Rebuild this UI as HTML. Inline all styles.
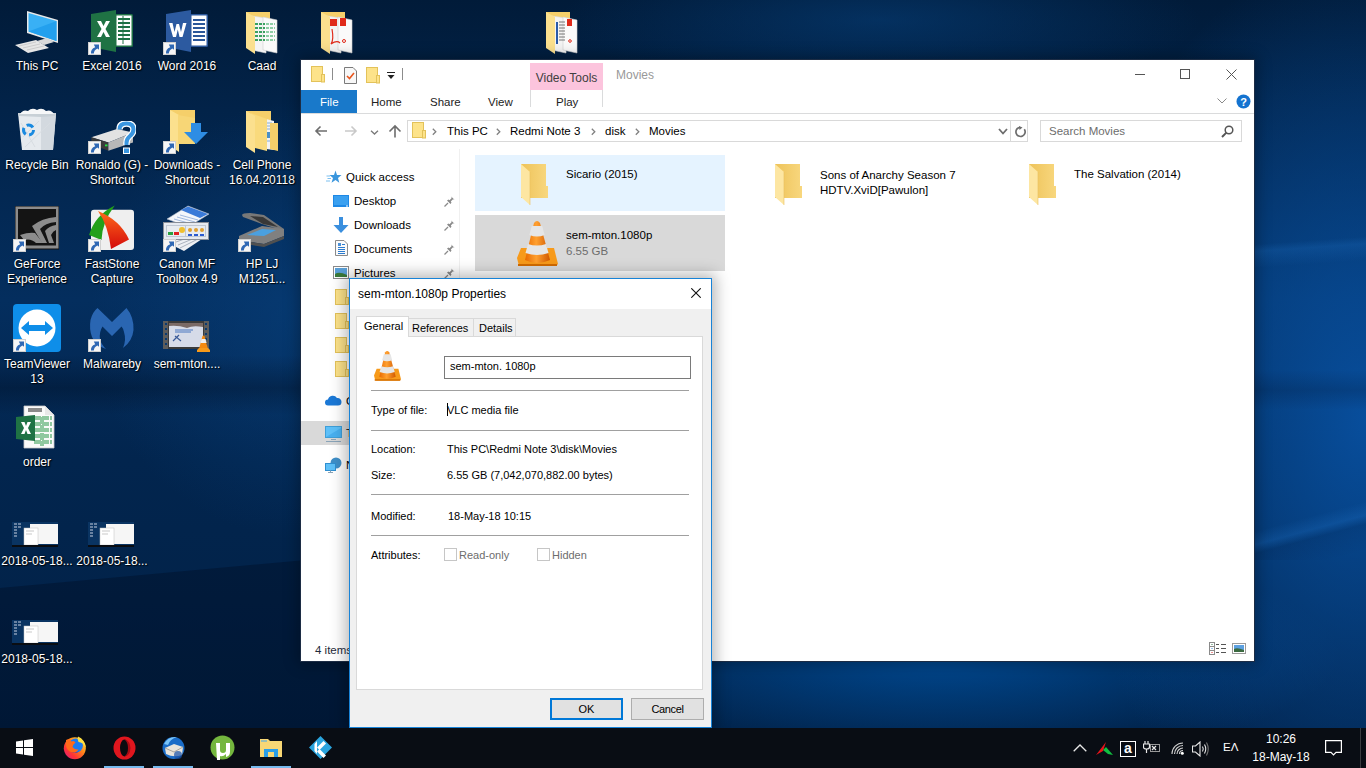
<!DOCTYPE html>
<html><head><meta charset="utf-8">
<style>
*{box-sizing:border-box;margin:0;padding:0}
html,body{width:1366px;height:768px;overflow:hidden}
body{position:relative;font-family:"Liberation Sans",sans-serif;font-size:12px;color:#000;
background:
 radial-gradient(ellipse 300px 470px at 1366px 420px, rgba(8,82,164,.9) 0%, rgba(8,82,164,0) 100%),
 radial-gradient(ellipse 400px 110px at 940px 655px, rgba(0,72,144,1) 0%, rgba(0,72,144,0) 100%),
 radial-gradient(ellipse 320px 70px at 880px 20px, rgba(6,62,120,.6) 0%, rgba(6,62,120,0) 100%),
 radial-gradient(ellipse 220px 220px at 310px 320px, rgba(8,66,128,.6) 0%, rgba(8,66,128,0) 100%),
 linear-gradient(180deg,#011b39 0px,#022349 110px,#042e5e 300px,#02254e 460px,#02234a 600px,#011f43 728px);}
.abs{position:absolute}
.lbl{position:absolute;color:#fff;text-align:center;font-size:12px;line-height:15px;text-shadow:1px 1px 1px rgba(0,0,0,.9),0 0 2px rgba(0,0,0,.6);width:74px}
/* explorer */
#exp{font-size:11.5px;position:absolute;left:300px;top:59px;width:955px;height:603px;background:#fff;border:1px solid #1c2c44;box-shadow:0 0 14px 2px rgba(0,0,0,.3)}
#dlg{position:absolute;left:349px;top:278px;width:363px;height:450px;background:#f0f0f0;border:1px solid #1883d7;box-shadow:0 0 14px 4px rgba(0,0,0,.28)}
#task{position:absolute;left:0;top:728px;width:1366px;height:40px;background:#090d14}

.chev{width:5px;height:7px;background:no-repeat}

.pin{width:11px;height:11px}
.bigfolder{width:28px;height:41px}
.vlc{width:41px;height:46px}

.dl{font-size:11px}
.sep{left:21px;width:318px;height:1px;background:#a0a0a0}
</style></head>
<body>

<div class="abs" style="left:0;top:0;width:350px;height:728px;background:rgba(0,8,22,.3);clip-path:polygon(0 588px,350px 556px,350px 728px,0 728px)"></div>
<div class="abs" style="left:0;top:355px;width:300px;height:60px;background:linear-gradient(180deg,rgba(0,8,22,0),rgba(0,8,22,.3) 55%,rgba(0,8,22,0))"></div>
<div class="abs" style="left:1254px;top:230px;width:112px;height:40px;background:linear-gradient(176deg,rgba(40,130,220,0) 30%,rgba(40,130,220,.18) 45%,rgba(40,130,220,0) 80%)"></div>
<div class="abs" style="left:1254px;top:370px;width:112px;height:40px;background:linear-gradient(180deg,rgba(0,10,30,0),rgba(0,10,30,.18) 50%,rgba(0,10,30,0))"></div>
<div class="abs" style="left:1254px;top:500px;width:112px;height:60px;background:linear-gradient(165deg,rgba(40,130,220,0) 35%,rgba(40,130,220,.2) 50%,rgba(0,10,30,.1) 60%,rgba(0,10,30,0) 90%)"></div>
<!-- desktop icons -->
<svg class="abs" style="left:14px;top:10px" width="46" height="44" viewBox="0 0 46 44"><path d="M13 1L44 10V33L13 23Z" fill="#e8e8e8"/><path d="M14.5 3L42.5 11V31L14.5 21.5Z" fill="#39b0f5"/><path d="M14.5 21.5L42.5 11V31Z" fill="#23a0ee"/><path d="M23 31L33 28L40 32L30 35Z" fill="#d9d9d9"/><path d="M1 35L22 30L35 38L14 43Z" fill="#e6e6e6"/><path d="M5 36L22 32M9 38L26 34M13 40L30 36" stroke="#b8b8b8" stroke-width=".6"/></svg>
<div class="lbl" style="left:0.0px;top:58.5px;width:74px">This PC</div>
<svg class="abs" style="left:88px;top:10px" width="46" height="43" viewBox="0 0 46 43"><rect x="27" y="4" width="18" height="33" rx="1.5" fill="#1e7145"/><rect x="28.5" y="5.5" width="15" height="30" fill="#fff"/><path d="M30 9H42M30 13H42M30 17H42M30 21H42M30 25H42M30 29H42" stroke="#1e7145" stroke-width="2"/><path d="M35 6V34" stroke="#1e7145" stroke-width="1"/><path d="M3 4L28 0V42L3 37Z" fill="#1f7244"/><path d="M9 11H13L15.5 16L18 11H22L17.5 19L22 27H18L15.5 22L13 27H9L13.5 19Z" fill="#fff"/></svg>
<svg class="abs" style="left:88px;top:42px" width="13" height="13" viewBox="0 0 13 13"><rect x="0.5" y="0.5" width="12" height="12" fill="#f6f6f6" stroke="#d0d0d0"/><path d="M3 11.5Q2.5 7 7.2 5.2L5.8 2.5H11V7.8L9.4 6.5Q6 8.2 5.8 11.5Z" fill="#2f68b4"/></svg>
<div class="lbl" style="left:75.0px;top:58.5px;width:74px">Excel 2016</div>
<svg class="abs" style="left:166px;top:10px" width="43" height="43" viewBox="0 0 43 43"><rect x="24" y="4" width="18" height="33" rx="1.5" fill="#2b579a"/><rect x="25.5" y="5.5" width="15" height="30" fill="#fff"/><path d="M27 10H39M27 14H39M27 18H39M27 22H39M27 26H39M27 30H39" stroke="#2b579a" stroke-width="2"/><path d="M0 4L25 0V42L0 37Z" fill="#2c5aa0"/><path d="M3 13H6.5L8.5 22L10.5 14H13L15 22L17 13H20.5L16.5 27H13.5L11.8 19.5L10 27H7Z" fill="#fff"/></svg>
<svg class="abs" style="left:163px;top:42px" width="13" height="13" viewBox="0 0 13 13"><rect x="0.5" y="0.5" width="12" height="12" fill="#f6f6f6" stroke="#d0d0d0"/><path d="M3 11.5Q2.5 7 7.2 5.2L5.8 2.5H11V7.8L9.4 6.5Q6 8.2 5.8 11.5Z" fill="#2f68b4"/></svg>
<div class="lbl" style="left:150.0px;top:58.5px;width:74px">Word 2016</div>
<svg class="abs" style="left:246px;top:12px" width="32" height="42" viewBox="0 0 32 42"><path d="M0 0H24V35H0Z" fill="#f5cf6a"/><path d="M6 4L20 6V41L6 38Z" fill="#f4f4f4" stroke="#d8d8d8" stroke-width=".6"/><path d="M17 5L31 8V41L17 38Z" fill="#fafafa" stroke="#d0d0d0" stroke-width=".6"/><path d="M9 12H19M9 16H19M9 20H19M9 24H19M9 28H19" stroke="#3aa060" stroke-width="1.8" stroke-dasharray="3 1"/><path d="M20 12H29M20 16H29M20 20H29M20 24H29M20 28H29" stroke="#6cc08a" stroke-width="1.6" stroke-dasharray="3 1"/><path d="M0 0L9 5V42L0 36Z" fill="#fbe08e"/></svg>
<div class="lbl" style="left:225.0px;top:58.5px;width:74px">Caad</div>
<svg class="abs" style="left:321px;top:12px" width="32" height="42" viewBox="0 0 32 42"><path d="M0 0H24V35H0Z" fill="#f5cf6a"/><path d="M6 4L20 6V41L6 38Z" fill="#f4f4f4" stroke="#d8d8d8" stroke-width=".6"/><path d="M17 5L31 8V41L17 38Z" fill="#fafafa" stroke="#d0d0d0" stroke-width=".6"/><rect x="9" y="7" width="7" height="7" fill="#e02a1a"/><path d="M11 17Q13 28 10 32Q16 28 19 31" fill="none" stroke="#e02a1a" stroke-width="1.2"/><rect x="19" y="6" width="6" height="8" fill="#e02a1a"/><circle cx="23" cy="29" r="1.5" fill="none" stroke="#e02a1a"/><path d="M0 0L9 5V42L0 36Z" fill="#fbe08e"/></svg>
<svg class="abs" style="left:546px;top:12px" width="32" height="42" viewBox="0 0 32 42"><path d="M0 0H24V35H0Z" fill="#f5cf6a"/><path d="M6 4L20 6V41L6 38Z" fill="#f4f4f4" stroke="#d8d8d8" stroke-width=".6"/><path d="M17 5L31 8V41L17 38Z" fill="#fafafa" stroke="#d0d0d0" stroke-width=".6"/><rect x="10" y="10" width="2" height="22" fill="#2a5aa8"/><path d="M13 10H19M13 13H19M13 16H19M13 19H19M13 22H19M13 25H19M13 28H19" stroke="#555" stroke-width=".8"/><rect x="21" y="7" width="5" height="7" fill="#e02a1a"/><circle cx="24" cy="29" r="1.3" fill="none" stroke="#e02a1a"/><path d="M0 0L9 5V42L0 36Z" fill="#fbe08e"/></svg>
<svg class="abs" style="left:17px;top:107px" width="40" height="45" viewBox="0 0 40 45"><path d="M1 6L39 6L36 43L5 43Z" fill="#e6eaee"/><path d="M24 9L39 6L36 43L24 43Z" fill="#d3d9df"/><path d="M1 6L39 6L38 9L24 10L2 9Z" fill="#c8d0d6"/><path d="M3 7Q6 2 11 4Q15 0 20 3Q25 0 29 4Q34 2 37 7Z" fill="#f6f7f8"/><path d="M6 30L22 14M8 40L33 16M4 16L18 40" stroke="#d8dde2" stroke-width="1"/><circle cx="11.5" cy="23" r="5" fill="none" stroke="#1a8ae0" stroke-width="3" stroke-dasharray="7 3.5"/></svg>
<div class="lbl" style="left:0.0px;top:157.5px;width:74px">Recycle Bin</div>
<svg class="abs" style="left:88px;top:121px" width="48" height="34" viewBox="0 0 48 34"><path d="M3.4 16.3L29 8L45 11.6L20.4 21.5Z" fill="#e2e2e2"/><path d="M3.4 16.3L20.4 21.5V29.7L3.4 23.3Z" fill="#3a3a3a"/><path d="M20.4 21.5L45 11.6V21.5L20.4 29.7Z" fill="#b8b8b8"/><rect x="17" y="23.5" width="2.5" height="1.8" fill="#20e040"/><path d="M31.5 8.5Q31.5 2.5 38.5 2.5Q45.5 2.5 45.5 8.5Q45.5 12.5 41.5 15.5Q38.5 18 38.5 22V24" fill="none" stroke="#fff" stroke-width="6.5"/><path d="M31.5 8.5Q31.5 2.5 38.5 2.5Q45.5 2.5 45.5 8.5Q45.5 12.5 41.5 15.5Q38.5 18 38.5 22V24" fill="none" stroke="#3a96e0" stroke-width="4"/><rect x="35" y="26.5" width="7" height="6.5" fill="#fff"/><rect x="36" y="27.5" width="5" height="4.5" fill="#3a96e0"/></svg>
<svg class="abs" style="left:88px;top:141px" width="13" height="13" viewBox="0 0 13 13"><rect x="0.5" y="0.5" width="12" height="12" fill="#f6f6f6" stroke="#d0d0d0"/><path d="M3 11.5Q2.5 7 7.2 5.2L5.8 2.5H11V7.8L9.4 6.5Q6 8.2 5.8 11.5Z" fill="#2f68b4"/></svg>
<div class="lbl" style="left:72.0px;top:157.5px;width:80px">Ronaldo (G) -<br>Shortcut</div>
<svg class="abs" style="left:170px;top:110px" width="40" height="42" viewBox="0 0 40 42"><path d="M0 0H25V34H0Z" fill="#f5cf6a"/><path d="M0 0L9 5V42L0 36Z" fill="#fbe08e"/><path d="M8 5L25 8V34L8 34Z" fill="#f7d676"/><path d="M21 13H31V22H38L26 34L14 22H21Z" fill="#2e8de4"/></svg>
<svg class="abs" style="left:163px;top:141px" width="13" height="13" viewBox="0 0 13 13"><rect x="0.5" y="0.5" width="12" height="12" fill="#f6f6f6" stroke="#d0d0d0"/><path d="M3 11.5Q2.5 7 7.2 5.2L5.8 2.5H11V7.8L9.4 6.5Q6 8.2 5.8 11.5Z" fill="#2f68b4"/></svg>
<div class="lbl" style="left:147.0px;top:157.5px;width:80px">Downloads -<br>Shortcut</div>
<svg class="abs" style="left:246px;top:111px" width="32" height="42" viewBox="0 0 32 42"><path d="M0 0H25V35H0Z" fill="#f5cf6a"/><path d="M20 8L28 10V39L20 38Z" fill="#f3f3f3"/><path d="M21 12H26M21 15H26M21 18H26M21 30H26" stroke="#6a9ac8" stroke-width=".8"/><rect x="21" y="21" width="5" height="6" fill="#4a90c8"/><path d="M24 12H32V40L24 38Z" fill="#f5cf6a"/><path d="M5 2L21 8V40L5 36Z" fill="#f9da7c"/><path d="M0 0L9 5V42L0 36Z" fill="#fbe08e"/></svg>
<div class="lbl" style="left:222.0px;top:157.5px;width:80px">Cell Phone<br>16.04.20118</div>
<svg class="abs" style="left:15px;top:206px" width="44" height="44" viewBox="0 0 44 44"><rect x="0" y="0" width="44" height="43.5" fill="#121212"/><rect x="0.5" y="0.5" width="43" height="42" fill="#8c8c8c"/><rect x="3" y="3" width="38" height="34" fill="#141414"/><rect x="3" y="37" width="38" height="2.5" fill="#141414"/><path d="M5 29Q14 26 20 27L28 37H21Q16 32 9 34Z" fill="#8c8c8c"/><path d="M17 20Q27 12 41 11V16Q30 17 25 23L32 37H27Z" fill="#8c8c8c"/><path d="M30 25Q34 20 41 19V24Q38 25 36 29L39 37H34Z" fill="#8c8c8c"/></svg>
<svg class="abs" style="left:13px;top:239px" width="13" height="13" viewBox="0 0 13 13"><rect x="0.5" y="0.5" width="12" height="12" fill="#f6f6f6" stroke="#d0d0d0"/><path d="M3 11.5Q2.5 7 7.2 5.2L5.8 2.5H11V7.8L9.4 6.5Q6 8.2 5.8 11.5Z" fill="#2f68b4"/></svg>
<div class="lbl" style="left:-3.0px;top:256.5px;width:80px">GeForce<br>Experience</div>
<svg class="abs" style="left:88px;top:204px" width="48" height="48" viewBox="0 0 48 48"><defs><linearGradient id="fsr" x1="0" y1="0" x2="0" y2="1"><stop offset="0" stop-color="#ff6a1a"/><stop offset="1" stop-color="#d40a0a"/></linearGradient></defs><rect x="3" y="5.7" width="43" height="40.3" rx="3" fill="#efefef"/><path d="M26.8 1.4Q7 11 1 31L13.5 36Q14 18 26.8 1.4Z" fill="#22a01a"/><path d="M10 7Q32 16 41 35.5L23 45Q20 21 10 7Z" fill="url(#fsr)"/></svg>
<svg class="abs" style="left:88px;top:239px" width="13" height="13" viewBox="0 0 13 13"><rect x="0.5" y="0.5" width="12" height="12" fill="#f6f6f6" stroke="#d0d0d0"/><path d="M3 11.5Q2.5 7 7.2 5.2L5.8 2.5H11V7.8L9.4 6.5Q6 8.2 5.8 11.5Z" fill="#2f68b4"/></svg>
<div class="lbl" style="left:72.0px;top:256.5px;width:80px">FastStone<br>Capture</div>
<svg class="abs" style="left:162px;top:205px" width="48" height="47" viewBox="0 0 48 47"><path d="M10 30L46 20V30L22 46L10 40Z" fill="#eef0f4"/><path d="M12 34L44 24M14 37L42 27M16 40L40 30M18 43L36 34" stroke="#9aa2b0" stroke-width=".8"/><path d="M5 14L26 1L47 9L26 22Z" fill="#f4f6fa" stroke="#b0b8c8" stroke-width=".6"/><path d="M19 5L26 1.5L46 9L38 13Z" fill="#3a7ad8"/><path d="M12 14L30 19M15 12L33 17M18 10L36 15" stroke="#8aa8d8" stroke-width=".8"/><rect x="1.5" y="17.5" width="45" height="17" fill="#e6eaf0" stroke="#8a8f98"/><rect x="4" y="20" width="40" height="12" fill="#c0c8d4"/><rect x="5" y="21" width="18" height="10" fill="#e8ecf0"/><rect x="24" y="21" width="19" height="10" fill="#e8ecf0"/><rect x="6" y="27" width="5" height="3" fill="#2aa040"/><rect x="12" y="27" width="5" height="3" fill="#e02020"/><circle cx="20" cy="25" r="3" fill="#f0c030"/><circle cx="28" cy="25" r="2" fill="#e0a030"/><circle cx="34" cy="25" r="2" fill="#e0a030"/><circle cx="40" cy="25" r="2" fill="#e0a030"/><path d="M26 30H30M32 30H36M38 30H42" stroke="#2a5ad0" stroke-width="2"/></svg>
<svg class="abs" style="left:163px;top:239px" width="13" height="13" viewBox="0 0 13 13"><rect x="0.5" y="0.5" width="12" height="12" fill="#f6f6f6" stroke="#d0d0d0"/><path d="M3 11.5Q2.5 7 7.2 5.2L5.8 2.5H11V7.8L9.4 6.5Q6 8.2 5.8 11.5Z" fill="#2f68b4"/></svg>
<div class="lbl" style="left:147.0px;top:256.5px;width:80px">Canon MF<br>Toolbox 4.9</div>
<svg class="abs" style="left:238px;top:211px" width="48" height="38" viewBox="0 0 48 38"><path d="M4 4Q4 2 12 2L26 4L46 18L43 19L24 13L5 6Z" fill="#787878"/><path d="M12 5L25 6L40 16L25 13Z" fill="#383838"/><path d="M1 25L24 15L46 18V25L26 33L1 29Z" fill="#808080"/><path d="M1 29L26 33L46 25V28L26 36L1 32Z" fill="#505050"/><path d="M9 24L24 18L38 19L26 25Z" fill="#4aa0e0"/></svg>
<svg class="abs" style="left:238px;top:239px" width="13" height="13" viewBox="0 0 13 13"><rect x="0.5" y="0.5" width="12" height="12" fill="#f6f6f6" stroke="#d0d0d0"/><path d="M3 11.5Q2.5 7 7.2 5.2L5.8 2.5H11V7.8L9.4 6.5Q6 8.2 5.8 11.5Z" fill="#2f68b4"/></svg>
<div class="lbl" style="left:222.0px;top:256.5px;width:80px">HP LJ<br>M1251...</div>
<svg class="abs" style="left:13px;top:304px" width="48" height="48" viewBox="0 0 48 48"><rect x="0" y="0" width="48" height="48" rx="4" fill="#0e8ee9"/><circle cx="24" cy="24" r="18.5" fill="#fff"/><path d="M8 24L16 17V21H32V17L40 24L32 31V27H16V31Z" fill="#0e8ee9"/></svg>
<svg class="abs" style="left:13px;top:339px" width="13" height="13" viewBox="0 0 13 13"><rect x="0.5" y="0.5" width="12" height="12" fill="#f6f6f6" stroke="#d0d0d0"/><path d="M3 11.5Q2.5 7 7.2 5.2L5.8 2.5H11V7.8L9.4 6.5Q6 8.2 5.8 11.5Z" fill="#2f68b4"/></svg>
<div class="lbl" style="left:-3.0px;top:356.5px;width:80px">TeamViewer<br>13</div>
<svg class="abs" style="left:88px;top:306px" width="48" height="45" viewBox="0 0 48 45"><path d="M9.5 2L24 16L38.5 2Q46 11 45.5 24Q44.5 35 35 42Q38.5 34 36 26Q35 22 33.5 20.5L24 30L14.5 20.5Q11 26 12 33Q13 38 18 43Q8 40 4 31Q1 23 2.5 14Q4.5 6 9.5 2Z" fill="#2a66b2"/></svg>
<svg class="abs" style="left:88px;top:339px" width="13" height="13" viewBox="0 0 13 13"><rect x="0.5" y="0.5" width="12" height="12" fill="#f6f6f6" stroke="#d0d0d0"/><path d="M3 11.5Q2.5 7 7.2 5.2L5.8 2.5H11V7.8L9.4 6.5Q6 8.2 5.8 11.5Z" fill="#2f68b4"/></svg>
<div class="lbl" style="left:75.0px;top:356.5px;width:74px">Malwareby</div>
<svg class="abs" style="left:163px;top:321px" width="47" height="32" viewBox="0 0 47 32"><rect x="0" y="0" width="46" height="28" fill="#5c5c5c"/><rect x="5" y="0" width="36" height="28" fill="#3a3a3a"/><rect x="6" y="2" width="34" height="24" fill="#d6dbe8"/><path d="M6 2H40V6Q30 4 24 7Q15 4 6 5Z" fill="#7a6a66"/><path d="M12 9H30M12 11H28" stroke="#4a78c0" stroke-width="1.2"/><path d="M12 15L18 20M10 20L16 14" stroke="#3a5a98" stroke-width="1.2"/><path d="M2 3H4M2 8H4M2 13H4M2 18H4M2 23H4M42 3H44M42 8H44M42 13H44M42 18H44M42 23H44" stroke="#0a3a70" stroke-width="2"/><path d="M39.5 15Q40.5 14 41.5 15L45 28H36Z" fill="#f58a10"/><path d="M38.5 18H42.5L43.5 22H37.5Z" fill="#eee"/><path d="M34 29L36 27H45L47 29V31H34Z" fill="#f79a1a"/></svg>
<div class="lbl" style="left:147.0px;top:356.5px;width:80px">sem-mton....</div>
<svg class="abs" style="left:15px;top:405px" width="40" height="44" viewBox="0 0 40 44"><path d="M9 1H30L39 10V43H9Z" fill="#fafafa" stroke="#c8c8c8" stroke-width=".8"/><path d="M30 1V10H39" fill="#e8e8e8"/><path d="M13 5H27" stroke="#8a8a8a" stroke-width="4"/><path d="M19 13H37M19 19H37M19 25H37M19 31H37M19 37H37M27 12V41" stroke="#90c8a0" stroke-width="4" stroke-dasharray="7 1"/><path d="M1 12L20 10V36L1 34Z" fill="#1f7244"/><path d="M6 17H9.5L11 21L12.5 17H16L13 23L16 29H12.5L11 25L9.5 29H6L9 23Z" fill="#fff"/></svg>
<div class="lbl" style="left:0.0px;top:454.5px;width:74px">order</div>
<svg class="abs" style="left:12px;top:522px" width="46" height="25" viewBox="0 0 46 25"><rect x="0" y="0" width="46" height="25" fill="#0a3462"/><path d="M2 2H5M6 2H9M2 5H5M6 5H9M2 8H5M2 11H5M2 14H5" stroke="#c8d0e0" stroke-width="1.2"/><rect x="18" y="2" width="28" height="20" fill="#f6f6f6"/><rect x="12" y="6" width="14" height="17" fill="#fff" stroke="#c0c0c0" stroke-width=".5"/><path d="M14 9H22M14 12H20" stroke="#bbb" stroke-width=".8"/><rect x="0" y="23" width="46" height="2" fill="#0a0d12"/></svg>
<div class="lbl" style="left:-3.0px;top:553.5px;width:80px">2018-05-18...</div>
<svg class="abs" style="left:88px;top:522px" width="46" height="25" viewBox="0 0 46 25"><rect x="0" y="0" width="46" height="25" fill="#0a3462"/><path d="M2 2H5M6 2H9M2 5H5M6 5H9M2 8H5M2 11H5M2 14H5" stroke="#c8d0e0" stroke-width="1.2"/><rect x="18" y="2" width="28" height="20" fill="#f6f6f6"/><rect x="12" y="6" width="14" height="17" fill="#fff" stroke="#c0c0c0" stroke-width=".5"/><path d="M14 9H22M14 12H20" stroke="#bbb" stroke-width=".8"/><rect x="0" y="23" width="46" height="2" fill="#0a0d12"/></svg>
<div class="lbl" style="left:72.0px;top:553.5px;width:80px">2018-05-18...</div>
<svg class="abs" style="left:12px;top:620px" width="46" height="25" viewBox="0 0 46 25"><rect x="0" y="0" width="46" height="25" fill="#0a3462"/><path d="M2 2H5M6 2H9M2 5H5M6 5H9M2 8H5M2 11H5M2 14H5" stroke="#c8d0e0" stroke-width="1.2"/><rect x="18" y="2" width="28" height="20" fill="#f6f6f6"/><rect x="12" y="6" width="14" height="17" fill="#fff" stroke="#c0c0c0" stroke-width=".5"/><path d="M14 9H22M14 12H20" stroke="#bbb" stroke-width=".8"/><rect x="0" y="23" width="46" height="2" fill="#0a0d12"/></svg>
<div class="lbl" style="left:-3.0px;top:651.5px;width:80px">2018-05-18...</div>
<!-- explorer window -->

<div id="exp">
 <!-- QAT -->
 <svg class="abs" style="left:10px;top:6px" width="14" height="17" viewBox="0 0 14 17"><rect x="0.5" y="0.5" width="11" height="15" fill="#fde38a" stroke="#e3c25a"/><rect x="10.5" y="8.5" width="3" height="7.5" fill="#fde38a" stroke="#e3c25a"/></svg>
 <div class="abs" style="left:31px;top:8px;width:1px;height:12px;background:#8c8c8c"></div>
 <svg class="abs" style="left:43px;top:7px" width="13" height="17" viewBox="0 0 13 17"><path d="M0.5 0.5H9L12.5 4V16.5H0.5Z" fill="#f7f7f7" stroke="#7a7a7a"/><path d="M3 9L5.5 11.5L10 6" fill="none" stroke="#e8541c" stroke-width="1.6"/></svg>
 <svg class="abs" style="left:65px;top:7px" width="14" height="17" viewBox="0 0 14 17"><rect x="0.5" y="0.5" width="11" height="15" fill="#fde38a" stroke="#e3c25a"/><rect x="10.5" y="8.5" width="3" height="7.5" fill="#fde38a" stroke="#e3c25a"/></svg>
 <svg class="abs" style="left:86px;top:12px" width="8" height="8" viewBox="0 0 8 8"><rect x="0" y="0" width="8" height="1" fill="#222"/><path d="M0.5 3H7.5L4 7Z" fill="#222"/></svg>
 <div class="abs" style="left:101px;top:8px;width:1px;height:12px;background:#8c8c8c"></div>
 <div class="abs" style="left:229px;top:3px;width:73px;height:27px;background:#fcc4dd"></div>
 <div class="abs" style="left:229px;top:11px;width:73px;text-align:center;color:#404040;font-size:12px">Video Tools</div>
 <div class="abs" style="left:315px;top:8px;color:#999;font-size:12px">Movies</div>
 <!-- window buttons -->
 <div class="abs" style="left:834px;top:14px;width:10px;height:1px;background:#555"></div>
 <div class="abs" style="left:879px;top:9px;width:10px;height:10px;border:1px solid #555"></div>
 <svg class="abs" style="left:925px;top:9px" width="11" height="11" viewBox="0 0 11 11"><path d="M0.5 0.5L10.5 10.5M10.5 0.5L0.5 10.5" stroke="#555" stroke-width="1"/></svg>
 <!-- ribbon tabs -->
 <div class="abs" style="left:0;top:30px;width:56px;height:23px;background:#1979ca"></div>
 <div class="abs" style="left:19px;top:36px;color:#fff">File</div>
 <div class="abs" style="left:70px;top:36px;color:#222">Home</div>
 <div class="abs" style="left:129px;top:36px;color:#222">Share</div>
 <div class="abs" style="left:187px;top:36px;color:#222">View</div>
 <div class="abs" style="left:229px;top:30px;width:1px;height:17px;background:#dadbdc"></div>
 <div class="abs" style="left:301px;top:30px;width:1px;height:17px;background:#dadbdc"></div>
 <div class="abs" style="left:255px;top:36px;color:#222">Play</div>
 <div class="abs" style="left:0;top:53px;width:953px;height:1px;background:#dadbdc"></div>
 <svg class="abs" style="left:916px;top:38px" width="10" height="6" viewBox="0 0 10 6"><path d="M0.5 0.5L5 5L9.5 0.5" fill="none" stroke="#8a8a8a"/></svg>
 <svg class="abs" style="left:935px;top:34px" width="15" height="15" viewBox="0 0 15 15"><circle cx="7.5" cy="7.5" r="7" fill="#1473d0"/><text x="7.5" y="11.5" text-anchor="middle" font-family="Liberation Sans" font-weight="bold" font-size="11" fill="#fff">?</text></svg>
 <!-- nav arrows -->
 <svg class="abs" style="left:13px;top:65px" width="14" height="12" viewBox="0 0 14 12"><path d="M13 6H2M6.5 1.5L2 6L6.5 10.5" fill="none" stroke="#6d6d6d" stroke-width="1.6"/></svg>
 <svg class="abs" style="left:43px;top:65px" width="14" height="12" viewBox="0 0 14 12"><path d="M1 6H12M7.5 1.5L12 6L7.5 10.5" fill="none" stroke="#c9c9c9" stroke-width="1.6"/></svg>
 <svg class="abs" style="left:69px;top:70px" width="9" height="5" viewBox="0 0 9 5"><path d="M1 0.8L4.5 4L8 0.8" fill="none" stroke="#7a7a7a" stroke-width="1.3"/></svg>
 <svg class="abs" style="left:87px;top:64px" width="14" height="14" viewBox="0 0 14 14"><path d="M7 13.5V2M1.5 7.5L7 2L12.5 7.5" fill="none" stroke="#6d6d6d" stroke-width="1.6"/></svg>
 <!-- address box -->
 <div class="abs" style="left:106px;top:60px;width:621px;height:22px;border:1px solid #d9d9d9"></div>
 <div class="abs" style="left:709px;top:60px;width:1px;height:22px;background:#d9d9d9"></div>
 <svg class="abs" style="left:697px;top:68px" width="10" height="7" viewBox="0 0 10 7"><path d="M1 1L5 5.5L9 1" fill="none" stroke="#6d6d6d" stroke-width="1.8"/></svg>
 <svg class="abs" style="left:714px;top:66px" width="12" height="12" viewBox="0 0 12 12"><path d="M9.3 3.2A4.6 4.6 0 1 1 5 1.3" fill="none" stroke="#6d6d6d" stroke-width="1.7"/><path d="M4 0L7.5 1.6L4.5 4Z" fill="#6d6d6d"/></svg>
 <svg class="abs" style="left:111px;top:62px" width="14" height="17" viewBox="0 0 14 17"><rect x="0.5" y="0.5" width="11" height="15" fill="#fde38a" stroke="#e3c25a"/><rect x="10.5" y="8.5" width="3" height="7.5" fill="#fde38a" stroke="#e3c25a"/></svg>
 <div class="abs chev" style="left:131px;top:66px"><svg width="5" height="8" viewBox="0 0 5 8"><path d="M0.8 0.8L3.8 3.8L0.8 6.8" fill="none" stroke="#808080" stroke-width="1.3"/></svg></div>
 <div class="abs" style="left:146px;top:65px">This PC</div>
 <div class="abs chev" style="left:195px;top:66px"><svg width="5" height="8" viewBox="0 0 5 8"><path d="M0.8 0.8L3.8 3.8L0.8 6.8" fill="none" stroke="#808080" stroke-width="1.3"/></svg></div>
 <div class="abs" style="left:209px;top:65px">Redmi Note 3</div>
 <div class="abs chev" style="left:290px;top:66px"><svg width="5" height="8" viewBox="0 0 5 8"><path d="M0.8 0.8L3.8 3.8L0.8 6.8" fill="none" stroke="#808080" stroke-width="1.3"/></svg></div>
 <div class="abs" style="left:304px;top:65px">disk</div>
 <div class="abs chev" style="left:334px;top:66px"><svg width="5" height="8" viewBox="0 0 5 8"><path d="M0.8 0.8L3.8 3.8L0.8 6.8" fill="none" stroke="#808080" stroke-width="1.3"/></svg></div>
 <div class="abs" style="left:348px;top:65px">Movies</div>
 <!-- search -->
 <div class="abs" style="left:739px;top:60px;width:202px;height:22px;border:1px solid #d9d9d9"></div>
 <div class="abs" style="left:748px;top:65px;color:#6d6d6d">Search Movies</div>
 <svg class="abs" style="left:920px;top:65px" width="13" height="13" viewBox="0 0 13 13"><circle cx="8" cy="5" r="3.8" fill="none" stroke="#555" stroke-width="1.5"/><path d="M5.4 7.6L1 12" stroke="#555" stroke-width="2"/></svg>
 <!-- nav pane -->
 <div class="abs" style="left:158px;top:89px;width:1px;height:511px;background:#f0f0f0"></div>
 <svg class="abs" style="left:25px;top:110px" width="16" height="14" viewBox="0 0 16 14"><path d="M9.5 0.5L11 5H15.5L12 8L13.3 12.8L9.5 10L5.5 12.8L7 8L3.5 5H8Z" fill="#3a96dd"/><path d="M0.5 6H4M1.5 8.5H5M0 11H4" stroke="#7cc0f0" stroke-width="1"/></svg>
 <div class="abs" style="left:45px;top:111px">Quick access</div>
 <svg class="abs" style="left:32px;top:135px" width="16" height="12" viewBox="0 0 16 12"><rect x="0" y="0" width="16" height="12" fill="#1e88e5"/><rect x="1" y="1" width="14" height="9" fill="#3aa0f0"/><path d="M13 11H15" stroke="#fff"/></svg>
 <div class="abs" style="left:53px;top:135px">Desktop</div>
 <svg class="abs" style="left:32px;top:157px" width="16" height="17" viewBox="0 0 16 17"><path d="M6 0H10V8H15.5L8 16L0.5 8H6Z" fill="#3a8fde"/></svg>
 <div class="abs" style="left:53px;top:159px">Downloads</div>
 <svg class="abs" style="left:34px;top:180px" width="13" height="16" viewBox="0 0 13 16"><path d="M0.5 0.5H9L12.5 4V15.5H0.5Z" fill="#fafafa" stroke="#8a8a8a"/><rect x="3" y="3" width="3" height="3" fill="#4a90d8"/><rect x="7" y="4" width="3" height="1" fill="#2a7bd0"/><rect x="3" y="7" width="7" height="1" fill="#2a7bd0"/><rect x="3" y="9" width="7" height="1" fill="#2a7bd0"/><rect x="3" y="11" width="7" height="1" fill="#2a7bd0"/><rect x="3" y="13" width="7" height="1" fill="#2a7bd0"/></svg>
 <div class="abs" style="left:53px;top:183px">Documents</div>
 <svg class="abs" style="left:32px;top:206px" width="16" height="14" viewBox="0 0 16 14"><rect x="0.5" y="0.5" width="15" height="12" fill="#fff" stroke="#8a8a8a"/><rect x="2" y="2" width="12" height="9" fill="#5aa0d8"/><path d="M2 8Q6 5 14 9V11H2Z" fill="#3a7a3a"/></svg>
 <div class="abs" style="left:53px;top:207px">Pictures</div>
 <div class="pin abs" style="left:143px;top:136px"><svg width="11" height="11" viewBox="0 0 11 11"><path d="M0.5 10.5L4 7" stroke="#8a8a8a" stroke-width="1.3"/><path d="M3 4.5L6.5 8L7.5 6.5L6.8 5.5L9 3.3L10.5 3.8L7.2 0.5L7.7 2L5.5 4.2L4.5 3.5Z" fill="#8a8a8a"/></svg></div>
 <div class="pin abs" style="left:143px;top:160px"><svg width="11" height="11" viewBox="0 0 11 11"><path d="M0.5 10.5L4 7" stroke="#8a8a8a" stroke-width="1.3"/><path d="M3 4.5L6.5 8L7.5 6.5L6.8 5.5L9 3.3L10.5 3.8L7.2 0.5L7.7 2L5.5 4.2L4.5 3.5Z" fill="#8a8a8a"/></svg></div>
 <div class="pin abs" style="left:143px;top:184px"><svg width="11" height="11" viewBox="0 0 11 11"><path d="M0.5 10.5L4 7" stroke="#8a8a8a" stroke-width="1.3"/><path d="M3 4.5L6.5 8L7.5 6.5L6.8 5.5L9 3.3L10.5 3.8L7.2 0.5L7.7 2L5.5 4.2L4.5 3.5Z" fill="#8a8a8a"/></svg></div>
 <div class="pin abs" style="left:143px;top:208px"><svg width="11" height="11" viewBox="0 0 11 11"><path d="M0.5 10.5L4 7" stroke="#8a8a8a" stroke-width="1.3"/><path d="M3 4.5L6.5 8L7.5 6.5L6.8 5.5L9 3.3L10.5 3.8L7.2 0.5L7.7 2L5.5 4.2L4.5 3.5Z" fill="#8a8a8a"/></svg></div>
 <svg class="abs" style="left:34px;top:229px" width="14" height="16" viewBox="0 0 14 16"><rect x="0.5" y="0.5" width="11" height="15" fill="#fde38a" stroke="#e3c25a"/><rect x="10.5" y="8.5" width="3" height="7" fill="#fde38a" stroke="#e3c25a"/></svg>
 <svg class="abs" style="left:34px;top:253px" width="14" height="16" viewBox="0 0 14 16"><rect x="0.5" y="0.5" width="11" height="15" fill="#fde38a" stroke="#e3c25a"/><rect x="10.5" y="8.5" width="3" height="7" fill="#fde38a" stroke="#e3c25a"/></svg>
 <svg class="abs" style="left:34px;top:277px" width="14" height="16" viewBox="0 0 14 16"><rect x="0.5" y="0.5" width="11" height="15" fill="#fde38a" stroke="#e3c25a"/><rect x="10.5" y="8.5" width="3" height="7" fill="#fde38a" stroke="#e3c25a"/></svg>
 <svg class="abs" style="left:34px;top:301px" width="14" height="16" viewBox="0 0 14 16"><rect x="0.5" y="0.5" width="11" height="15" fill="#fde38a" stroke="#e3c25a"/><rect x="10.5" y="8.5" width="3" height="7" fill="#fde38a" stroke="#e3c25a"/></svg>
 <svg class="abs" style="left:24px;top:334px" width="17" height="12" viewBox="0 0 17 12"><path d="M3 11.5A3 3 0 0 1 3 5.5A5 5 0 0 1 12 4A3.8 3.8 0 0 1 16.5 8A3.5 3.5 0 0 1 13 11.5Z" fill="#1b78d6"/></svg>
 <div class="abs" style="left:0;top:361px;width:60px;height:24px;background:#d9d9d9"></div>
 <svg class="abs" style="left:24px;top:366px" width="17" height="16" viewBox="0 0 17 16"><rect x="0.5" y="0.5" width="16" height="11" fill="#5ec0f8" stroke="#3f9fd8"/><path d="M1 11L16 2V11Z" fill="#48b0f0"/><path d="M6 13.5H11M1 15.5H16" stroke="#8aa4b8"/></svg>
 <svg class="abs" style="left:24px;top:397px" width="17" height="17" viewBox="0 0 17 17"><circle cx="11" cy="6" r="5.5" fill="#3f8fc8"/><rect x="0.5" y="6.5" width="10" height="7" fill="#5ec0f8" stroke="#2f8fd0"/><path d="M3 15.5H8M5.5 13.5V15.5" stroke="#8aa4b8"/></svg>
 <div class="abs" style="left:45px;top:335px;clip-path:inset(0 0 0 0)">OneDrive</div>
 <div class="abs" style="left:45px;top:367px">This PC</div>
 <div class="abs" style="left:45px;top:399px">Network</div>
 <!-- content tiles -->
 <div class="abs" style="left:174px;top:95px;width:250px;height:56px;background:#e5f3ff"></div>
 <div class="abs" style="left:174px;top:155px;width:250px;height:56px;background:#d9d9d9"></div>
 <div class="bigfolder abs" style="left:220px;top:104px"><svg width="28" height="41" viewBox="0 0 28 41"><defs><linearGradient id="fb" x1="0" x2="1"><stop offset="0" stop-color="#eec35a"/><stop offset="1" stop-color="#f8d77e"/></linearGradient></defs><path d="M0 0H25V22H27V34H0Z" fill="url(#fb)"/><path d="M0 0L9 8V41L0 33Z" fill="#fde6a2"/><path d="M9 8V41" stroke="#eac060" stroke-width=".6"/></svg></div>
 <div class="abs" style="left:265px;top:108px">Sicario (2015)</div>
 <div class="vlc abs" style="left:216px;top:160px"><svg width="41" height="46" viewBox="0 0 41 46"><defs><linearGradient id="vo" x1="0" x2="1"><stop offset="0" stop-color="#e86a00"/><stop offset=".45" stop-color="#ffa030"/><stop offset="1" stop-color="#d05800"/></linearGradient></defs><path d="M0 38L4 28H37L41 44L39 46H2Z" fill="#f79a1a"/><path d="M1 44H40V46H1Z" fill="#d06a00"/><path d="M17 3Q20 -1 23 3L33 40Q20 46 8 40Z" fill="url(#vo)"/><path d="M14.8 6H25.2L27.6 15Q20 18 12.4 15Z" fill="#e6e6e6"/><path d="M11 24Q20 27 29 24L31.5 33Q20 37 8.5 33Z" fill="#e6e6e6"/></svg></div>
 <div class="abs" style="left:265px;top:169px">sem-mton.1080p</div>
 <div class="abs" style="left:265px;top:185px;color:#6d6d6d">6.55 GB</div>
 <div class="bigfolder abs" style="left:474px;top:104px"><svg width="28" height="41" viewBox="0 0 28 41"><defs><linearGradient id="fb" x1="0" x2="1"><stop offset="0" stop-color="#eec35a"/><stop offset="1" stop-color="#f8d77e"/></linearGradient></defs><path d="M0 0H25V22H27V34H0Z" fill="url(#fb)"/><path d="M0 0L9 8V41L0 33Z" fill="#fde6a2"/><path d="M9 8V41" stroke="#eac060" stroke-width=".6"/></svg></div>
 <div class="abs" style="left:519px;top:108px;line-height:15px">Sons of Anarchy Season 7<br>HDTV.XviD[Pawulon]</div>
 <div class="bigfolder abs" style="left:728px;top:104px"><svg width="28" height="41" viewBox="0 0 28 41"><defs><linearGradient id="fb" x1="0" x2="1"><stop offset="0" stop-color="#eec35a"/><stop offset="1" stop-color="#f8d77e"/></linearGradient></defs><path d="M0 0H25V22H27V34H0Z" fill="url(#fb)"/><path d="M0 0L9 8V41L0 33Z" fill="#fde6a2"/><path d="M9 8V41" stroke="#eac060" stroke-width=".6"/></svg></div>
 <div class="abs" style="left:773px;top:108px">The Salvation (2014)</div>
 <!-- status bar -->
 <div class="abs" style="left:14px;top:584px;color:#1e2a3a">4 items</div>
 <svg class="abs" style="left:908px;top:582px" width="17" height="13" viewBox="0 0 17 13"><rect x="0.5" y="0.5" width="5" height="12" fill="#fff" stroke="#8a8a8a"/><path d="M1 4.5H5M1 8.5H5" stroke="#8a8a8a"/><rect x="2.5" y="2" width="1" height="1" fill="#2a7a4a"/><rect x="2.5" y="6" width="1" height="1" fill="#3a8ae0"/><rect x="2.5" y="10" width="1" height="1" fill="#e02020"/><path d="M7 2.5H10M12 2.5H17M7 6.5H10M12 6.5H17M7 10.5H10M12 10.5H17" stroke="#555" stroke-width="1"/></svg>
 <svg class="abs" style="left:931px;top:583px" width="14" height="11" viewBox="0 0 14 11"><rect x="0.5" y="0.5" width="13" height="10" fill="#fff" stroke="#9a9a9a"/><rect x="2" y="2" width="10" height="7" fill="#5ca0e0"/><path d="M2 6Q5 4 12 7V9H2Z" fill="#3a6a40"/></svg>
</div>


<!-- properties dialog -->

<div id="dlg">
 <div class="abs" style="left:0;top:0;width:361px;height:30px;background:#fff"></div>
 <div class="abs" style="left:8px;top:8px;font-size:12px">sem-mton.1080p Properties</div>
 <svg class="abs" style="left:341px;top:9px" width="10" height="10" viewBox="0 0 10 10"><path d="M0.3 0.3L9.7 9.7M9.7 0.3L0.3 9.7" stroke="#111" stroke-width="1.1"/></svg>
 <div class="abs" style="left:6px;top:57px;width:347px;height:354px;background:#fff;border:1px solid #d9d9d9"></div>
 <div class="abs" style="left:58px;top:39px;width:66px;height:19px;background:#f0f0f0;border:1px solid #d9d9d9"></div>
 <div class="abs" style="left:123px;top:39px;width:43px;height:19px;background:#f0f0f0;border:1px solid #d9d9d9"></div>
 <div class="abs" style="left:6px;top:37px;width:53px;height:21px;background:#fff;border:1px solid #d9d9d9;border-bottom:none"></div>
 <div class="abs dl" style="left:14px;top:41px">General</div>
 <div class="abs dl" style="left:62px;top:43px">References</div>
 <div class="abs dl" style="left:129px;top:43px">Details</div>
 <div class="vlc abs" style="left:24px;top:71px;width:27px;height:31px"><svg width="27" height="31" viewBox="0 0 41 46"><defs><linearGradient id="vo" x1="0" x2="1"><stop offset="0" stop-color="#e86a00"/><stop offset=".45" stop-color="#ffa030"/><stop offset="1" stop-color="#d05800"/></linearGradient></defs><path d="M0 38L4 28H37L41 44L39 46H2Z" fill="#f79a1a"/><path d="M1 44H40V46H1Z" fill="#d06a00"/><path d="M17 3Q20 -1 23 3L33 40Q20 46 8 40Z" fill="url(#vo)"/><path d="M14.8 6H25.2L27.6 15Q20 18 12.4 15Z" fill="#e6e6e6"/><path d="M11 24Q20 27 29 24L31.5 33Q20 37 8.5 33Z" fill="#e6e6e6"/></svg></div>
 <div class="abs" style="left:94px;top:77px;width:247px;height:23px;border:1px solid #7a7a7a;background:#fff"></div>
 <div class="abs dl" style="left:100px;top:81px">sem-mton. 1080p</div>
 <div class="sep abs" style="top:111px"></div>
 <div class="abs dl" style="left:21px;top:125px">Type of file:</div>
 <div class="abs" style="left:97px;top:124px;width:1px;height:13px;background:#000"></div>
 <div class="abs dl" style="left:97px;top:125px">VLC media file</div>
 <div class="sep abs" style="top:151px"></div>
 <div class="abs dl" style="left:21px;top:164px">Location:</div>
 <div class="abs dl" style="left:97px;top:164px">This PC\Redmi Note 3\disk\Movies</div>
 <div class="abs dl" style="left:21px;top:190px">Size:</div>
 <div class="abs dl" style="left:97px;top:190px">6.55 GB (7,042,070,882.00 bytes)</div>
 <div class="sep abs" style="top:215px"></div>
 <div class="abs dl" style="left:21px;top:231px">Modified:</div>
 <div class="abs dl" style="left:98px;top:231px">18-May-18 10:15</div>
 <div class="sep abs" style="top:256px"></div>
 <div class="abs dl" style="left:21px;top:270px">Attributes:</div>
 <div class="abs" style="left:94px;top:269px;width:13px;height:13px;border:1px solid #c6c6c6;background:#fff"></div>
 <div class="abs dl" style="left:109px;top:270px;color:#6d6d6d">Read-only</div>
 <div class="abs" style="left:187px;top:269px;width:13px;height:13px;border:1px solid #c6c6c6;background:#fff"></div>
 <div class="abs dl" style="left:202px;top:270px;color:#6d6d6d">Hidden</div>
 <div class="abs" style="left:200px;top:419px;width:73px;height:22px;border:2px solid #0078d7;background:#e1e1e1;text-align:center;line-height:18px;font-size:11px">OK</div>
 <div class="abs" style="left:281px;top:419px;width:73px;height:22px;border:1px solid #adadad;background:#e1e1e1;text-align:center;line-height:20px;font-size:11px;letter-spacing:-0.4px">Cancel</div>
</div>


<!-- taskbar -->

<div id="task">
 <svg class="abs" style="left:16px;top:11px" width="17" height="17" viewBox="0 0 17 17"><path d="M0 2.4L7 1.4V8H0ZM8 1.3L17 0V8H8ZM0 9H7V15.6L0 14.6ZM8 9H17V17L8 15.7Z" fill="#fff"/></svg>
 <svg class="abs" style="left:63px;top:8px" width="24" height="24" viewBox="0 0 24 24"><defs><linearGradient id="ffg" x1="0" y1="1" x2="1" y2="0"><stop offset="0" stop-color="#d8188a"/><stop offset=".3" stop-color="#ff3434"/><stop offset=".62" stop-color="#ff8a1a"/><stop offset=".85" stop-color="#ffd23a"/><stop offset="1" stop-color="#fff040"/></linearGradient></defs><circle cx="11.8" cy="12.2" r="11" fill="url(#ffg)"/><path d="M12.9 2.5A7 7 0 1 1 12.9 16.5A7 7 0 0 1 12.9 2.5Z" fill="#1a7af0"/><path d="M7 15Q11 18 16 15.5Q13 17.5 10 17Z" fill="#3a20a8"/><path d="M3 4L5.5 3L8.5 5.5Q11 4 12.5 6.5Q10 8 9.5 11Q12 14 15.5 13.5Q13.5 17 9.5 16.5Q3.5 15 3 9Z" fill="#ff6a1a"/><path d="M15 0.5Q22 3.5 23 12Q20 6 15.5 6Q14 3 15 0.5Z" fill="#ffe040"/></svg>
 <svg class="abs" style="left:113px;top:8px" width="23" height="24" viewBox="0 0 23 24"><ellipse cx="11.5" cy="12" rx="11" ry="11.5" fill="#e0161e"/><ellipse cx="11.5" cy="12" rx="4.5" ry="8.5" fill="#0a0c10"/><path d="M11.5 3.5Q17 4 17.5 12Q17 20 11.5 20.5Q15 18 15 12Q15 6 11.5 3.5Z" fill="#a80c14"/></svg>
 <svg class="abs" style="left:162px;top:8px" width="23" height="24" viewBox="0 0 23 24"><circle cx="11.5" cy="12" r="11" fill="#1a6cc8"/><path d="M2 8Q6 0 15 1Q8 3 6 9Z" fill="#7ac4f8"/><path d="M3 12L12 8L21 11L20 19Q12 22 4 18Z" fill="#e8e4dc"/><path d="M3 12L12 16L21 11" fill="none" stroke="#a8a49c" stroke-width="1"/><circle cx="16" cy="19" r="4" fill="#1550a8" opacity=".7"/></svg>
 <svg class="abs" style="left:210px;top:7px" width="25" height="25" viewBox="0 0 25 25"><circle cx="12.5" cy="12.5" r="12" fill="#74b63e"/><path d="M6 8H10V15Q10 18 13 18Q16 18 16 15V8H20V17Q20 21 16 22L16 19Q13 22 10 21V25H7Z" fill="#fff"/></svg>
 <svg class="abs" style="left:260px;top:11px" width="22" height="18" viewBox="0 0 22 18"><path d="M0 0H8L10 2H22V18H0Z" fill="#f8d775"/><path d="M1 2H7" stroke="#5ab0e0" stroke-width="1.2"/><path d="M4 10H18V18H14V13H8V18H4Z" fill="#2a9ee8"/></svg>
 <svg class="abs" style="left:309px;top:8px" width="23" height="23" viewBox="0 0 23 23"><path d="M11.5 0L23 11.5L11.5 23L0 11.5Z" fill="#2aa4de"/><path d="M8 5V18L5.5 15V8Z" fill="#fff"/><path d="M8 11.5L14.5 5L17 7.5L10.5 14Z" fill="#fff"/><path d="M10.5 13L17 19.5L14.5 22L8 15.5Z" fill="#fff"/></svg>
 <div class="abs" style="left:104px;top:38px;width:40px;height:2px;background:#76b9ed"></div>
 <div class="abs" style="left:153px;top:38px;width:40px;height:2px;background:#76b9ed"></div>
 <div class="abs" style="left:251px;top:38px;width:40px;height:2px;background:#76b9ed"></div>
 <!-- tray -->
 <svg class="abs" style="left:1073px;top:16px" width="14" height="8" viewBox="0 0 14 8"><path d="M0.7 7.3L7 1L13.3 7.3" fill="none" stroke="#e8e8e8" stroke-width="1.3"/></svg>
 <svg class="abs" style="left:1096px;top:14px" width="17" height="13" viewBox="0 0 17 13"><path d="M0 13L10 0L7 9Z" fill="#e8141a"/><path d="M7 8L12 12L17 13L10 5Z" fill="#10c040"/></svg>
 <div class="abs" style="left:1120px;top:13px;width:16px;height:16px;border:1.5px solid #fff;color:#fff;font-weight:bold;font-size:14px;line-height:12px;text-align:center">a</div>
 <svg class="abs" style="left:1143px;top:13px" width="18" height="13" viewBox="0 0 18 13"><path d="M2 0V3M5 0V3M0.5 3H6.5V6Q6.5 8 3.5 8Q0.5 8 0.5 6ZM3.5 8V12" fill="none" stroke="#e8e8e8" stroke-width="1.2"/><rect x="7.5" y="3.5" width="9" height="7" fill="none" stroke="#999" stroke-width="1"/><path d="M9 5L13 9M13 5L9 9" stroke="#e8e8e8" stroke-width="1.2"/></svg>
 <svg class="abs" style="left:1171px;top:14px" width="13" height="13" viewBox="0 0 13 13"><path d="M1 12A11 11 0 0 1 12 1M3.5 12A8.5 8.5 0 0 1 12 3.5M6 12A6 6 0 0 1 12 6M8.5 12A3.5 3.5 0 0 1 12 8.5" fill="none" stroke="#cfcfcf" stroke-width="1.1"/><circle cx="11.3" cy="11.3" r="1.5" fill="#fff"/></svg>
 <svg class="abs" style="left:1192px;top:13px" width="17" height="16" viewBox="0 0 17 16"><path d="M0.5 5H3.5L8 1V15L3.5 11H0.5Z" fill="none" stroke="#e8e8e8" stroke-width="1.1"/><path d="M10.5 5.5Q12 8 10.5 10.5M12.5 3.5Q15 8 12.5 12.5" fill="none" stroke="#e8e8e8" stroke-width="1.1"/><path d="M14.5 1.5Q18 8 14.5 14.5" fill="none" stroke="#777" stroke-width="1.1"/></svg>
 <div class="abs" style="left:1223px;top:13px;color:#fff;font-size:11.5px">ΕΛ</div>
 <div class="abs" style="left:1248px;top:2px;width:66px;text-align:center;color:#fff;font-size:12px;line-height:18px">10:26<br>18-May-18</div>
 <svg class="abs" style="left:1325px;top:12px" width="17" height="16" viewBox="0 0 17 16"><path d="M0.6 0.6H16.4V12.4H11L8.5 15L6 12.4H0.6Z" fill="none" stroke="#fff" stroke-width="1.2"/></svg>
 <div class="abs" style="left:1360px;top:0;width:1px;height:40px;background:#3a3c40"></div>
</div>


</body></html>
